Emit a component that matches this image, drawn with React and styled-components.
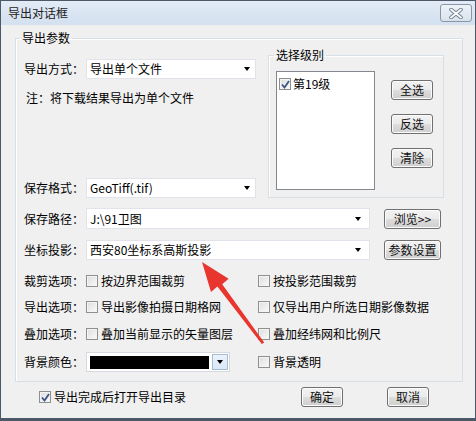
import React from 'react';
import styled, { createGlobalStyle } from 'styled-components';

const Global = createGlobalStyle`
  html, body {
    margin: 0;
    padding: 0;
    background: #f0f0f0;
  }
  * {
    box-sizing: border-box;
  }
`;

const Window = styled.div`
  position: relative;
  width: 476px;
  height: 421px;
  background: #f0f0f0;
  border: 1px solid #4c5868;
  border-bottom-width: 3px;
  font-family: "Noto Sans CJK SC", "Microsoft YaHei", sans-serif;
  font-size: 12px;
  line-height: 16px;
  color: #000;
  overflow: hidden;
`;

const TitleBar = styled.div`
  height: 24px;
  display: flex;
  align-items: center;
  justify-content: space-between;
  padding: 0 3px 0 7px;
  background: linear-gradient(#e2ebf6, #d3e0ef);
  color: #222;
`;

const CloseButton = styled.div`
  width: 32px;
  height: 18px;
  display: flex;
  align-items: center;
  justify-content: center;
  border: 1px solid #8896a8;
  border-radius: 3px;
  background: linear-gradient(#eef3f9, #d9e2ec);
`;

const Client = styled.div`
  padding: 5px 12px 0 14px;
`;

const Group = styled.fieldset`
  margin: 0;
  padding: 0 18px 9px 8px;
  border: 1px solid #d5dfe5;
  box-shadow: inset 1px 1px 0 #fff;
  min-width: 0;
`;

const Legend = styled.legend`
  padding: 0 2px;
  margin-left: ${p => p.$shift}px;
  line-height: 16px;
`;

const TopSection = styled.div`
  display: flex;
  align-items: stretch;
`;

const LeftColumn = styled.div`
  width: 232px;
  display: flex;
  flex-direction: column;
`;

const FieldRow = styled.div`
  display: flex;
  align-items: center;
  height: ${p => p.$h || 20}px;
  margin-top: ${p => p.$top || 0}px;
`;

const Label = styled.span`
  width: 62px;
  flex: none;
  white-space: nowrap;
`;

const Note = styled.div`
  margin-top: 11px;
  padding-left: 2px;
  flex: 1;
`;

const Combo = styled.div`
  width: ${p => p.$w}px;
  height: 100%;
  display: flex;
  align-items: center;
  background: #fff;
  border: 1px solid #e2e3ea;
  padding-left: 3px;
`;

const ComboText = styled.span`
  flex: 1;
  white-space: nowrap;
`;

const Arrow = styled.span`
  width: 0;
  height: 0;
  border-left: 3.5px solid transparent;
  border-right: 3.5px solid transparent;
  border-top: 4px solid #000;
  margin-right: ${p => p.$mr ?? 5}px;
`;

const LevelBox = styled.fieldset`
  margin: 1px 0 0 12px;
  width: 176px;
  padding: 0 0 7px 7px;
  border: 1px solid #d5dfe5;
  box-shadow: inset 1px 1px 0 #fff;
  min-width: 0;
  display: flex;
`;

const LevelInner = styled.div`
  display: flex;
  margin-top: 8px;
`;

const ListBox = styled.div`
  width: 99px;
  height: 119px;
  background: #fff;
  border: 1px solid #828790;
  padding: 4px 0 0 2px;
`;

const ListItem = styled.div`
  display: flex;
  align-items: center;
  gap: 2px;
`;

const ButtonStack = styled.div`
  display: flex;
  flex-direction: column;
  gap: 14px;
  margin: 9px 0 0 16px;
`;

const Button = styled.div`
  width: ${p => p.$w || 42}px;
  height: 20px;
  display: flex;
  align-items: center;
  justify-content: center;
  border: 1px solid #707070;
  border-radius: 3px;
  background: linear-gradient(#f2f2f2 0%, #ebebeb 50%, #dddddd 51%, #cfcfcf 100%);
  box-shadow: inset 0 0 0 1px #fcfcfc;
  white-space: nowrap;
  color: #111;
`;

const SideButton = styled(Button)`
  margin-left: 14px;
`;

const CheckCell = styled.div`
  width: ${p => p.$w || 172}px;
  margin-left: ${p => p.$ml || 0}px;
  display: flex;
  align-items: center;
  gap: 3px;
  white-space: nowrap;
`;

const Box = styled.span`
  width: 12px;
  height: 12px;
  flex: none;
  border: 1px solid #8e8f8f;
  background: linear-gradient(135deg, #dcdcdc, #fbfbfb);
  box-shadow: inset 0 0 0 1px #f4f4f4;
  display: flex;
  align-items: center;
  justify-content: center;
`;

const ColorCombo = styled.div`
  width: 144px;
  height: 100%;
  display: flex;
  align-items: stretch;
  background: #fff;
  border: 1px solid #d5d9e0;
  padding: 3px 1px 2px 3px;
  gap: 3px;
`;

const Swatch = styled.div`
  flex: 1;
  background: #000;
`;

const DropButton = styled.div`
  width: 16px;
  margin: -2px 0 -1px;
  display: flex;
  align-items: center;
  justify-content: center;
  background: linear-gradient(#eaf2fb, #d9e7f6);
  border: 1px solid #a7bcd3;
`;

const Footer = styled.div`
  display: flex;
  align-items: center;
  height: 20px;
  margin-top: 5px;
  padding-left: 24px;
`;

const FooterButtons = styled.div`
  margin-left: auto;
  margin-right: 34px;
  display: flex;
  gap: 44px;
`;

const Overlay = styled.svg`
  position: absolute;
  left: 0;
  top: 0;
  pointer-events: none;
`;

const Check = ({ checked }) => (
  <Box>
    {checked && (
      <svg width="9" height="9" viewBox="0 0 9 9">
        <path d="M1 4.5 L3.5 7.5 L8 1" fill="none" stroke="#3d5583" strokeWidth="1.8" />
      </svg>
    )}
  </Box>
);

const CheckItem = ({ checked, text, w, ml }) => (
  <CheckCell $w={w} $ml={ml}>
    <Check checked={checked} />
    <span>{text}</span>
  </CheckCell>
);

const App = () => (
  <Window>
    <Global />
    <TitleBar>
      <span>导出对话框</span>
      <CloseButton>
        <svg width="14" height="11" viewBox="0 0 14 11">
          <path d="M2 1.5 L12 9.5 M12 1.5 L2 9.5" stroke="#6f7d8f" strokeWidth="3.6" strokeLinecap="round" />
          <path d="M2 1.5 L12 9.5 M12 1.5 L2 9.5" stroke="#fff" strokeWidth="1.8" strokeLinecap="round" />
        </svg>
      </CloseButton>
    </TitleBar>
    <Client>
      <Group>
        <Legend $shift={-4}>导出参数</Legend>
        <TopSection>
          <LeftColumn>
            <FieldRow $top={13}>
              <Label>导出方式：</Label>
              <Combo $w={170}>
                <ComboText>导出单个文件</ComboText>
                <Arrow />
              </Combo>
            </FieldRow>
            <Note>注：将下载结果导出为单个文件</Note>
            <FieldRow>
              <Label>保存格式：</Label>
              <Combo $w={170}>
                <ComboText>GeoTiff(.tif)</ComboText>
                <Arrow />
              </Combo>
            </FieldRow>
          </LeftColumn>
          <LevelBox>
            <Legend $shift={-2}>选择级别</Legend>
            <LevelInner>
              <ListBox>
                <ListItem>
                  <Check checked />
                  <span>第19级</span>
                </ListItem>
              </ListBox>
              <ButtonStack>
                <Button>全选</Button>
                <Button>反选</Button>
                <Button>清除</Button>
              </ButtonStack>
            </LevelInner>
          </LevelBox>
        </TopSection>

        <FieldRow $top={10} $h={21}>
          <Label>保存路径：</Label>
          <Combo $w={284}>
            <ComboText>J:\91卫图</ComboText>
            <Arrow $mr={8} />
          </Combo>
          <SideButton $w={57}>浏览&gt;&gt;</SideButton>
        </FieldRow>
        <FieldRow $top={11}>
          <Label>坐标投影：</Label>
          <Combo $w={284}>
            <ComboText>西安80坐标系高斯投影</ComboText>
            <Arrow $mr={8} />
          </Combo>
          <SideButton $w={57}>参数设置</SideButton>
        </FieldRow>
        <FieldRow $top={11}>
          <Label>裁剪选项：</Label>
          <CheckItem text="按边界范围裁剪" />
          <CheckItem text="按投影范围裁剪" w={180} />
        </FieldRow>
        <FieldRow $top={6}>
          <Label>导出选项：</Label>
          <CheckItem text="导出影像拍摄日期格网" />
          <CheckItem text="仅导出用户所选日期影像数据" w={180} />
        </FieldRow>
        <FieldRow $top={7}>
          <Label>叠加选项：</Label>
          <CheckItem text="叠加当前显示的矢量图层" />
          <CheckItem text="叠加经纬网和比例尺" w={180} />
        </FieldRow>
        <FieldRow $top={8}>
          <Label>背景颜色：</Label>
          <ColorCombo>
            <Swatch />
            <DropButton>
              <Arrow $mr={0} />
            </DropButton>
          </ColorCombo>
          <CheckItem text="背景透明" w={180} ml={28} />
        </FieldRow>
      </Group>
      <Footer>
        <CheckItem checked text="导出完成后打开导出目录" w={200} />
        <FooterButtons>
          <Button>确定</Button>
          <Button>取消</Button>
        </FooterButtons>
      </Footer>
    </Client>
    <Overlay width="476" height="421" viewBox="0 0 476 421">
      <polygon
        points="201,261 227.6,277.8 221.2,283.2 263.2,341.6 260.8,343 216.4,285.6 210,291"
        fill="#e8362f"
      />
    </Overlay>
  </Window>
);

export default App;
